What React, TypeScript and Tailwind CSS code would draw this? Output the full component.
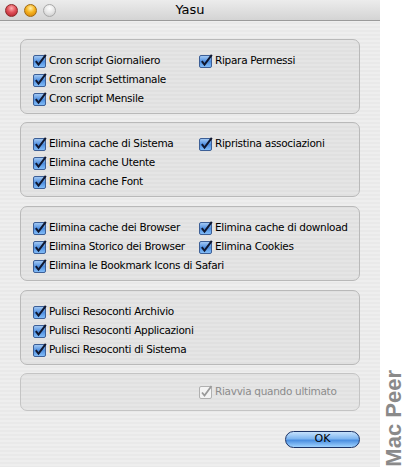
import React from "react";

const font = { fontFamily: '"DejaVu Sans", "Liberation Sans", sans-serif' };

function Check({ disabled = false }: { disabled?: boolean }) {
  if (disabled) {
    return (
      <svg width="14" height="14" viewBox="0 0 14 14" className="shrink-0">
        <rect x="0.5" y="1.5" width="12" height="12" rx="1.5" fill="#f4f4f4" stroke="#b0b0b0" />
        <path d="M3 7.5 L5.5 10.5 L12.5 1" fill="none" stroke="#9a9a9a" strokeWidth="1.8" />
      </svg>
    );
  }
  return (
    <svg width="14" height="14" viewBox="0 0 14 14" className="shrink-0">
      <defs>
        <linearGradient id="cb" x1="0" y1="0" x2="0" y2="1">
          <stop offset="0" stopColor="#a9cdf5" />
          <stop offset="0.5" stopColor="#4f8fe0" />
          <stop offset="1" stopColor="#86c0fa" />
        </linearGradient>
      </defs>
      <rect x="0.5" y="1.5" width="12" height="12" rx="1.5" fill="url(#cb)" stroke="#3d5f96" />
      <path d="M2.8 7.2 L5.5 10.6 L12.8 0.8" fill="none" stroke="#101830" strokeWidth="2" />
    </svg>
  );
}

function Item({ label, disabled = false, className = "" }: { label: string; disabled?: boolean; className?: string }) {
  return (
    <div className={"flex h-[19px] items-center gap-[2px] " + className}>
      <Check disabled={disabled} />
      <span className={"text-[10.5px] tracking-[-0.3px] whitespace-nowrap " + (disabled ? "text-[#8c8c8c]" : "text-black")}>{label}</span>
    </div>
  );
}

function Group({ rows, className = "" }: { rows: [string, string?][]; className?: string }) {
  return (
    <div className={"h-[75px] rounded-[7px] border border-[#b9b9b9] bg-black/[0.035] pl-[12px] pt-[11px] " + className}>
      {rows.map(([a, b], i) => (
        <div key={i} className="flex">
          <Item label={a} className="w-[166px]" />
          {b ? <Item label={b} /> : null}
        </div>
      ))}
    </div>
  );
}

export default function App() {
  return (
    <div className="flex h-[467px] w-[407px] bg-white" style={font}>
      <div className="flex h-[467px] w-[380px] flex-col bg-[repeating-linear-gradient(180deg,#eeeeee_0px,#eeeeee_2px,#e9e9e9_2px,#e9e9e9_4px)]">
        <div className="relative flex h-[21px] items-center justify-center border-b border-[#9a9a9a] bg-[linear-gradient(180deg,#ececec,#d4d4d4)]">
          <div className="absolute left-[5px] top-[4px] flex gap-[6px]">
            <div className="h-[13px] w-[13px] rounded-full border border-[#8a2a2a] bg-[radial-gradient(circle_at_50%_30%,#ffb0b0_0%,#e0505a_45%,#a81c24_100%)]" />
            <div className="h-[13px] w-[13px] rounded-full border border-[#a06a10] bg-[radial-gradient(circle_at_50%_30%,#fff0b0_0%,#f6b420_45%,#d07a08_100%)]" />
            <div className="h-[13px] w-[13px] rounded-full border border-[#a8a8a8] bg-[radial-gradient(circle_at_50%_30%,#ffffff_0%,#e6e6e6_50%,#c4c4c4_100%)]" />
          </div>
          <span className="text-[13px] text-black">Yasu</span>
        </div>
        <div className="flex flex-col px-[20px] pt-[18px]">
          <Group rows={[["Cron script Giornaliero", "Ripara Permessi"], ["Cron script Settimanale"], ["Cron script Mensile"]]} />
          <Group className="mt-[8px]" rows={[["Elimina cache di Sistema", "Ripristina associazioni"], ["Elimina cache Utente"], ["Elimina cache Font"]]} />
          <Group className="mt-[9px]" rows={[["Elimina cache dei Browser", "Elimina cache di download"], ["Elimina Storico dei Browser", "Elimina Cookies"], ["Elimina le Bookmark Icons di Safari"]]} />
          <Group className="mt-[9px]" rows={[["Pulisci Resoconti Archivio"], ["Pulisci Resoconti Applicazioni"], ["Pulisci Resoconti di Sistema"]]} />
          <div className="mt-[8px] flex h-[38px] items-center rounded-[7px] border border-[#c4c4c4] bg-black/[0.03] pl-[178px]">
            <Item label="Riavvia quando ultimato" disabled />
          </div>
          <div className="mt-[20px] flex justify-end">
            <button className="flex h-[17px] w-[75px] items-center justify-center rounded-full border border-[#1d3466] bg-[linear-gradient(180deg,#c6e2fc_0%,#7fb6f0_45%,#4a8ee0_55%,#9fd2ff_100%)] text-[11px] text-black">
              OK
            </button>
          </div>
        </div>
      </div>
      <div className="flex flex-1 flex-col items-center justify-end">
        <div className="rotate-180 text-[22px] font-bold leading-none text-[#8a8a8a] [writing-mode:vertical-rl]" style={{ fontFamily: '"Liberation Sans", Arial, sans-serif' }}>
          Mac Peer
        </div>
      </div>
    </div>
  );
}
